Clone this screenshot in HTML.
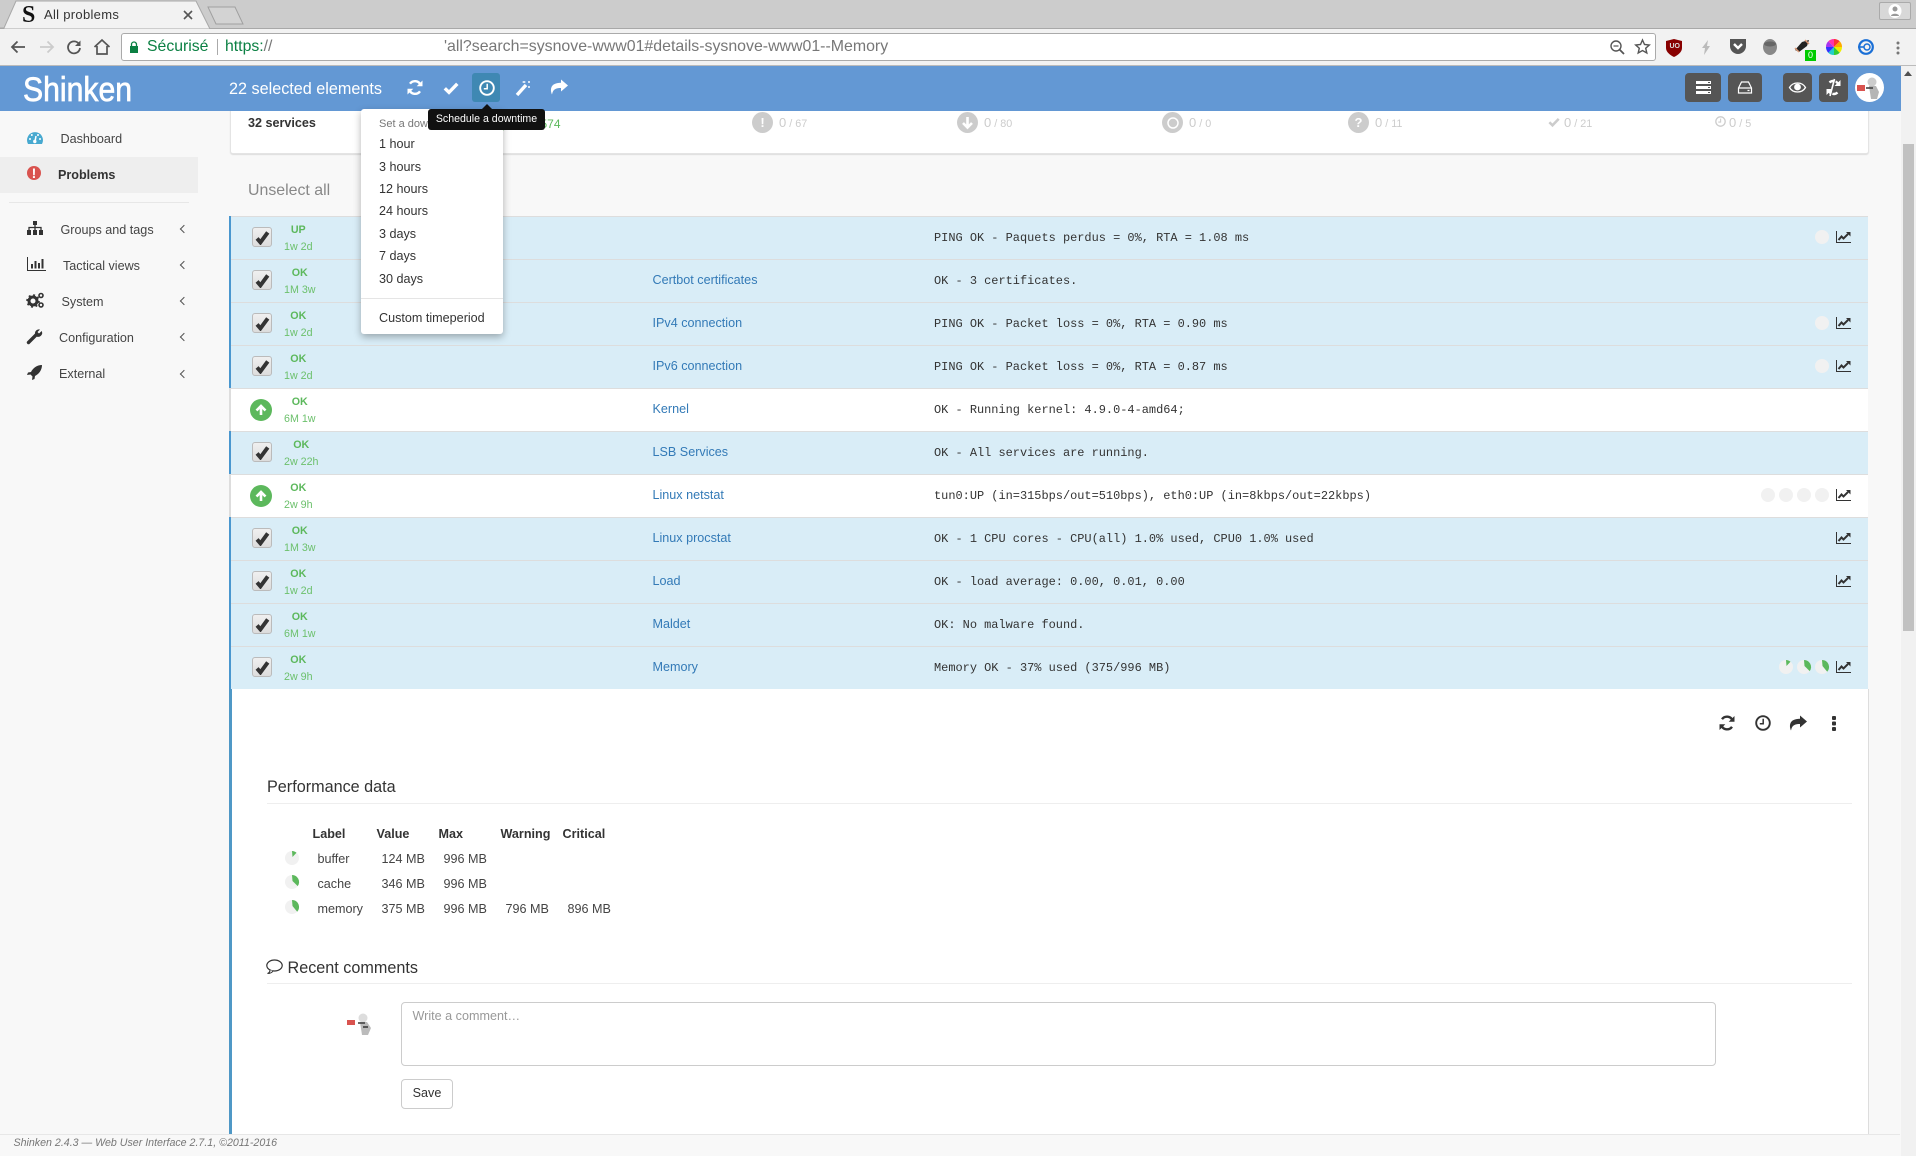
<!DOCTYPE html>
<html><head><meta charset="utf-8"><title>All problems</title>
<style>
*{box-sizing:border-box}
html,body{margin:0;padding:0;width:1916px;height:1156px;overflow:hidden;background:#f8f8f8;font-family:"Liberation Sans",sans-serif;font-size:12.6px;color:#333}
.a{position:absolute;white-space:nowrap;line-height:16px}
svg{position:absolute;overflow:visible}
.tbtn{position:absolute;top:73px;height:29px;background:#555;border-radius:4px}
.side{position:absolute;white-space:nowrap;line-height:16px;color:#444;font-size:12.6px}
.chev{position:absolute;left:181px;width:6px;height:6px;border-left:1.3px solid #555;border-bottom:1.3px solid #555;transform:rotate(45deg)}
.item{position:absolute;left:379px;line-height:16px;color:#333;white-space:nowrap}
.r{position:absolute;left:230px;width:1638px;height:43px;border-top:1px solid #ddd;background:#fff}
.r.s{background:#d9edf7}
.r::before{content:"";position:absolute;left:-1px;top:-1px;bottom:0;width:2px;background:#ddd}
.r.s::before{background:#4a97cf}
.st{position:absolute;left:54px;top:5px;text-align:center;color:#5cb85c;font-size:10.7px;line-height:17px}
.st b{display:block}
.st i{display:block;font-style:normal;color:#6cc06c}
.svc{position:absolute;left:422.5px;top:12px;line-height:16px;color:#337ab7}
.out{position:absolute;left:704px;top:13px;font:11.95px/16px "Liberation Mono",monospace;color:#333;white-space:pre}
.cb{position:absolute;left:22px;top:9.5px;width:20px;height:20px;background:linear-gradient(#f0f0f0,#dcdcdc);border:1px solid #bbb;border-radius:3px}
.gc{position:absolute;left:20px;top:9.5px;width:22px;height:22px;border-radius:50%;background:#5cb85c}
.dot{position:absolute;top:13px;width:14px;height:14px;border-radius:50%;background:#f1f1f1}
.gray{position:absolute;top:112px;width:21px;height:21px;border-radius:50%;background:#ccc;color:#fff;text-align:center;font:bold 13px/21px "Liberation Sans",sans-serif}
.cnt{position:absolute;top:114.5px;line-height:16px;color:#ccc;font-size:10.8px;white-space:nowrap}
.cnt span{font-size:13px}
.th{position:absolute;top:826px;font-weight:bold;line-height:16px;color:#333}
.td{position:absolute;line-height:16px;color:#444;white-space:nowrap}
</style></head><body>
<svg width="0" height="0" style="position:absolute"><defs>
<symbol id="refresh" viewBox="0 0 16 16"><path d="M13.6 5.8A6 6 0 0 0 3 4.2M2.4 10.2A6 6 0 0 0 13 11.8" fill="none" stroke="currentColor" stroke-width="2.4"/><path d="M15.5 1V6.8H9.7ZM.5 15V9.2H6.3Z" fill="currentColor"/></symbol>
<symbol id="check" viewBox="0 0 16 16"><path d="M1.8 8.3L6 12.4L14.3 3.8" fill="none" stroke="currentColor" stroke-width="3.4"/></symbol>
<symbol id="clock" viewBox="0 0 16 16"><circle cx="8" cy="8" r="6.8" fill="none" stroke="currentColor" stroke-width="1.9"/><path d="M8.2 3.8V8.8H4.8" fill="none" stroke="currentColor" stroke-width="1.5"/></symbol>
<symbol id="share" viewBox="0 0 18 16"><path d="M11 .5L18 6.5L11 12.5V9C6 9 3 10 2 15.5C0 11 0 3.8 11 3.8Z" fill="currentColor"/></symbol>
<symbol id="chart" viewBox="0 0 15 12"><path d="M.5 0V11.5H15" fill="none" stroke="currentColor" stroke-width="1"/><path d="M2.5 9L5.5 5.5L7.5 7.5L12 3" fill="none" stroke="currentColor" stroke-width="2"/><path d="M10 1H14.5V5.5Z" fill="currentColor"/></symbol>
<symbol id="tick" viewBox="0 0 16 16"><path d="M2.2 9L5.8 13.2L13.6 2.6" fill="none" stroke="#333" stroke-width="4.2"/></symbol>
</defs></svg>

<!-- Chrome -->
<div style="position:absolute;left:0;top:0;width:1916px;height:29px;background:#ccc;border-bottom:1px solid #a8a8a8"></div>
<svg style="left:0;top:0" width="260" height="29"><path d="M0 28H4L16 1H196L210 29H0Z" fill="#f2f2f2" stroke="#a8a8a8"/><path d="M208 7H235L243 24H216Z" fill="#d3d3d3" stroke="#a0a0a0"/></svg>
<div class="a" style="left:22px;top:3px;font:bold 24px/24px 'Liberation Serif',serif;color:#111">S</div>
<div class="a" style="left:44px;top:7px;font-size:13px;color:#333;letter-spacing:.3px">All problems</div>
<svg style="left:184px;top:11px" width="8" height="8"><path d="M0 0L8 8M8 0L0 8" stroke="#555" stroke-width="1.6"/></svg>
<div style="position:absolute;left:0;top:29px;width:1916px;height:37px;background:#f2f2f2;border-bottom:1px solid #bbb"></div>
<svg style="left:10px;top:40px" width="16" height="14"><path d="M15 7H2M7.5 1.5L2 7L7.5 12.5" fill="none" stroke="#555" stroke-width="1.8"/></svg>
<svg style="left:39px;top:40px" width="16" height="14"><path d="M1 7H14M8.5 1.5L14 7L8.5 12.5" fill="none" stroke="#ccc" stroke-width="1.8"/></svg>
<svg style="left:67px;top:40px" width="14" height="14"><path d="M12 4A6 6 0 1 0 13 8" fill="none" stroke="#555" stroke-width="1.8"/><path d="M13.5 .5V6H8Z" fill="#555"/></svg>
<svg style="left:94px;top:39px" width="16" height="16"><path d="M.5 8L8 1L15.5 8M3 7V15H13V7" fill="none" stroke="#555" stroke-width="1.7"/></svg>
<div style="position:absolute;left:121px;top:33px;width:1535px;height:28px;background:#fff;border:1px solid #aaa;border-radius:3px"></div>
<svg style="left:130px;top:41px" width="8" height="12"><path d="M1.5 5V3.5a2.5 2.5 0 0 1 5 0V5" fill="none" stroke="#0b8043" stroke-width="1.3"/><rect y="5" width="8" height="7" fill="#0b8043"/></svg>
<div class="a" style="left:147px;top:39px;font-size:15.8px;color:#0b8043">Sécurisé</div>
<div style="position:absolute;left:217px;top:39px;width:1px;height:16px;background:#aaa"></div>
<div class="a" style="left:225px;top:39px;font-size:15.8px;color:#0b8043">https:<span style="color:#777">//</span></div>
<div class="a" style="left:444px;top:39px;font-size:15.9px;color:#777">'all?search=sysnove-www01#details-sysnove-www01--Memory</div>
<svg style="left:1610px;top:40px" width="15" height="15"><circle cx="6" cy="6" r="5" fill="none" stroke="#555" stroke-width="1.4"/><path d="M3.5 6H8.5" stroke="#555" stroke-width="1.2"/><path d="M9.5 9.5L14 14" stroke="#555" stroke-width="1.8"/></svg>
<svg style="left:1635px;top:39px" width="15" height="15"><path d="M7.5 1L9.5 5.5L14.3 6L10.7 9.2L11.8 14L7.5 11.5L3.2 14L4.3 9.2L.7 6L5.5 5.5Z" fill="none" stroke="#555" stroke-width="1.4"/></svg>
<svg style="left:1666px;top:39px" width="16" height="18"><path d="M0 2L8 0L16 2V9C16 13 12 16 8 18C4 16 0 13 0 9Z" fill="#800"/></svg>
<div class="a" style="left:1669.5px;top:41px;font:bold 7px/12px 'Liberation Sans',sans-serif;color:#ddd">UO</div>
<svg style="left:1702px;top:40px" width="8" height="15"><path d="M6 0L0 8H3L2 15L8 6H5Z" fill="#bbb"/></svg>
<svg style="left:1730px;top:39px" width="16" height="15"><path d="M0 0H16V7A8 8 0 0 1 0 7Z" fill="#555"/><path d="M4 5L8 9L12 5" fill="none" stroke="#fff" stroke-width="2.4"/></svg>
<svg style="left:1763px;top:39px" width="14" height="16"><ellipse cx="7" cy="8" rx="7" ry="8" fill="#888"/><ellipse cx="7" cy="5" rx="6" ry="2.5" fill="#666"/></svg>
<svg style="left:1794px;top:39px" width="16" height="14"><path d="M1 11L8 3L15 1L13 7L5 13Z" fill="#222"/><path d="M1 9L5 13M11 1L15 5" stroke="#d97" stroke-width="1.5"/></svg>
<div style="position:absolute;left:1805px;top:50px;width:11px;height:11px;background:#0c0;color:#fff;font:9px/11px 'Liberation Sans',sans-serif;text-align:center">0</div>
<svg style="left:1826px;top:39px" width="16" height="16" viewBox="0 0 16 16"><path d="M8 8L8 0A8 8 0 0 1 13.7 2.3Z" fill="#f33"/><path d="M8 8L13.7 2.3A8 8 0 0 1 16 8Z" fill="#fa0"/><path d="M8 8H16A8 8 0 0 1 13.7 13.7Z" fill="#ee0"/><path d="M8 8L13.7 13.7A8 8 0 0 1 8 16Z" fill="#3c3"/><path d="M8 8V16A8 8 0 0 1 2.3 13.7Z" fill="#2cc"/><path d="M8 8L2.3 13.7A8 8 0 0 1 0 8Z" fill="#33f"/><path d="M8 8H0A8 8 0 0 1 2.3 2.3Z" fill="#a3e"/><path d="M8 8L2.3 2.3A8 8 0 0 1 8 0Z" fill="#f3a"/></svg>
<svg style="left:1858px;top:39px" width="16" height="16"><circle cx="8" cy="8" r="6.8" fill="none" stroke="#1a6fd6" stroke-width="2.2"/><circle cx="9" cy="8" r="3" fill="none" stroke="#1a6fd6" stroke-width="1.5"/><path d="M0 8H6" stroke="#1a6fd6" stroke-width="1.6"/></svg>
<svg style="left:1896px;top:41px" width="4" height="14"><circle cx="2" cy="2" r="1.5" fill="#777"/><circle cx="2" cy="7" r="1.5" fill="#777"/><circle cx="2" cy="12" r="1.5" fill="#777"/></svg>
<div style="position:absolute;left:1879px;top:2px;width:32px;height:18px;background:#d8d8d8;border:1px solid #aaa;border-radius:2px"></div>
<svg style="left:1888px;top:4px" width="14" height="14"><ellipse cx="7" cy="7" rx="6.5" ry="7" fill="#fff"/><circle cx="7" cy="5" r="2.5" fill="#999"/><path d="M3 12C3 9 11 9 11 12Z" fill="#999"/></svg>

<!-- Sidebar -->
<div style="position:absolute;left:0;top:157px;width:198px;height:36px;background:#eee"></div>
<div style="position:absolute;left:9px;top:202px;width:180px;height:1px;background:#e7e7e7"></div>
<svg style="left:27px;top:131px" width="16" height="13" viewBox="0 0 16 13"><path d="M1 13A8 8 0 1 1 15 13Z" fill="#47a9d0"/><circle cx="3" cy="8" r="1" fill="#fff"/><circle cx="4.8" cy="4" r="1" fill="#fff"/><circle cx="11" cy="4" r="1" fill="#fff"/><circle cx="13" cy="8" r="1" fill="#fff"/><path d="M8 10.5L9 5" stroke="#fff" stroke-width="1.5"/><circle cx="7.8" cy="10.5" r="1.7" fill="#fff"/></svg>
<div class="side" style="left:60.5px;top:131px">Dashboard</div>
<div style="position:absolute;left:27px;top:166px;width:14px;height:14px;border-radius:50%;background:#d9534f;color:#fff;text-align:center;font:bold 14px/14px 'Liberation Sans',sans-serif">!</div>
<div class="side" style="left:58px;top:166.5px;font-weight:bold;color:#333">Problems</div>
<svg style="left:27px;top:221px" width="16" height="14" viewBox="0 0 16 14"><path d="M6 0H10V4H6ZM0 9H4V14H0ZM6 9H10V14H6ZM12 9H16V14H12Z" fill="#333"/><path d="M8 4V9M2 9V6.5H14V9" fill="none" stroke="#333" stroke-width="1.3"/></svg>
<div class="side" style="left:60.5px;top:222px">Groups and tags</div><div class="chev" style="top:226px"></div>
<svg style="left:27px;top:257px" width="19" height="14" viewBox="0 0 19 14"><path d="M.5 0V13.5H19" fill="none" stroke="#333"/><path d="M4 7H6V11.5H4ZM7.5 4H9.5V11.5H7.5ZM11 6H13V11.5H11ZM14.5 2H16.5V11.5H14.5Z" fill="#333"/></svg>
<div class="side" style="left:63px;top:257.5px">Tactical views</div><div class="chev" style="top:262px"></div>
<svg style="left:27px;top:292px" width="18" height="16" viewBox="0 0 18 16"><circle cx="6" cy="9" r="4" fill="none" stroke="#333" stroke-width="3"/><circle cx="6" cy="9" r="6" fill="none" stroke="#333" stroke-width="1.6" stroke-dasharray="2 2.7"/><circle cx="14" cy="3.5" r="2" fill="none" stroke="#333" stroke-width="1.6"/><circle cx="14" cy="13" r="2" fill="none" stroke="#333" stroke-width="1.6"/></svg>
<div class="side" style="left:61.5px;top:293.5px">System</div><div class="chev" style="top:298px"></div>
<svg style="left:27px;top:329px" width="15" height="15" viewBox="0 0 15 15"><path d="M1.5 13.5L9 6" stroke="#333" stroke-width="3.4" stroke-linecap="round"/><path d="M8 5A4 4 0 0 1 13 .5L10.5 3L12 4.5L14.7 2A4 4 0 0 1 9.5 7.5Z" fill="#333"/></svg>
<div class="side" style="left:59px;top:329.5px">Configuration</div><div class="chev" style="top:334px"></div>
<svg style="left:27px;top:365px" width="15" height="15" viewBox="0 0 15 15"><path d="M15 0C10 0 6 3 4 7L1 7.5L0 10L3.5 9.5L5.5 11.5L5 15L7.5 14L8 11C12 9 15 5 15 0Z" fill="#333"/></svg>
<div class="side" style="left:59px;top:366px">External</div><div class="chev" style="top:371px"></div>

<!-- Top card -->
<div style="position:absolute;left:230px;top:100px;width:1639px;height:54px;background:#fff;border:1px solid #e4e4e4;border-top:0;border-radius:0 0 3px 3px;box-shadow:0 1px 1px #ddd"></div>
<div class="a" style="left:248px;top:115px;font-weight:bold">32 services</div>
<div class="gray" style="left:486px;background:#5cb85c"></div>
<div class="a" style="left:516px;top:115.5px;font-size:12px;color:#5cb85c"><span style="font-size:13px">32</span> / 574</div>
<div class="gray" style="left:752px">!</div><div class="cnt" style="left:779px"><span>0</span> / 67</div>
<div class="gray" style="left:957px"><svg style="left:5px;top:4px" width="11" height="13"><path d="M5.5 1V11M1 7L5.5 11.5L10 7" fill="none" stroke="#fff" stroke-width="2.6"/></svg></div><div class="cnt" style="left:984px"><span>0</span> / 80</div>
<div class="gray" style="left:1162px"><svg style="left:4.5px;top:4.5px" width="12" height="12"><circle cx="6" cy="6" r="5" fill="none" stroke="#fff" stroke-width="1.5"/></svg></div><div class="cnt" style="left:1189px"><span>0</span> / 0</div>
<div class="gray" style="left:1348px">?</div><div class="cnt" style="left:1375px"><span>0</span> / 11</div>
<svg style="left:1548px;top:116px;color:#ccc" width="12" height="12"><use href="#check"/></svg><div class="cnt" style="left:1564px"><span>0</span> / 21</div>
<svg style="left:1715px;top:116px;color:#ccc" width="11" height="11"><use href="#clock"/></svg><div class="cnt" style="left:1729px"><span>0</span> / 5</div>
<div class="a" style="left:248px;top:182px;font-size:15.9px;line-height:18px;color:#888">Unselect all</div>

<!-- Rows -->
<div class="r s" style="top:216px"><span class="cb"><svg style="left:2px;top:2px" width="15" height="15"><use href="#tick"/></svg></span><div class="st"><b>UP</b><i>1w 2d</i></div><div class="out">PING OK - Paquets perdus = 0%, RTA = 1.08 ms</div><span class="dot" style="left:1585px"></span><svg style="left:1606px;top:13.5px;color:#333" width="15" height="12"><use href="#chart"/></svg></div>
<div class="r s" style="top:259px"><span class="cb"><svg style="left:2px;top:2px" width="15" height="15"><use href="#tick"/></svg></span><div class="st"><b>OK</b><i>1M 3w</i></div><div class="svc">Certbot certificates</div><div class="out">OK - 3 certificates.</div></div>
<div class="r s" style="top:302px"><span class="cb"><svg style="left:2px;top:2px" width="15" height="15"><use href="#tick"/></svg></span><div class="st"><b>OK</b><i>1w 2d</i></div><div class="svc">IPv4 connection</div><div class="out">PING OK - Packet loss = 0%, RTA = 0.90 ms</div><span class="dot" style="left:1585px"></span><svg style="left:1606px;top:13.5px;color:#333" width="15" height="12"><use href="#chart"/></svg></div>
<div class="r s" style="top:345px"><span class="cb"><svg style="left:2px;top:2px" width="15" height="15"><use href="#tick"/></svg></span><div class="st"><b>OK</b><i>1w 2d</i></div><div class="svc">IPv6 connection</div><div class="out">PING OK - Packet loss = 0%, RTA = 0.87 ms</div><span class="dot" style="left:1585px"></span><svg style="left:1606px;top:13.5px;color:#333" width="15" height="12"><use href="#chart"/></svg></div>
<div class="r" style="top:388px"><span class="gc"><svg style="left:5px;top:5px" width="12" height="12"><path d="M6 11V2M1.5 6.5L6 2L10.5 6.5" fill="none" stroke="#fff" stroke-width="2.6"/></svg></span><div class="st"><b>OK</b><i>6M 1w</i></div><div class="svc">Kernel</div><div class="out">OK - Running kernel: 4.9.0-4-amd64;</div></div>
<div class="r s" style="top:431px"><span class="cb"><svg style="left:2px;top:2px" width="15" height="15"><use href="#tick"/></svg></span><div class="st"><b>OK</b><i>2w 22h</i></div><div class="svc">LSB Services</div><div class="out">OK - All services are running.</div></div>
<div class="r" style="top:474px"><span class="gc"><svg style="left:5px;top:5px" width="12" height="12"><path d="M6 11V2M1.5 6.5L6 2L10.5 6.5" fill="none" stroke="#fff" stroke-width="2.6"/></svg></span><div class="st"><b>OK</b><i>2w 9h</i></div><div class="svc">Linux netstat</div><div class="out">tun0:UP (in=315bps/out=510bps), eth0:UP (in=8kbps/out=22kbps)</div><span class="dot" style="left:1531px"></span><span class="dot" style="left:1549px"></span><span class="dot" style="left:1567px"></span><span class="dot" style="left:1585px"></span><svg style="left:1606px;top:13.5px;color:#333" width="15" height="12"><use href="#chart"/></svg></div>
<div class="r s" style="top:517px"><span class="cb"><svg style="left:2px;top:2px" width="15" height="15"><use href="#tick"/></svg></span><div class="st"><b>OK</b><i>1M 3w</i></div><div class="svc">Linux procstat</div><div class="out">OK - 1 CPU cores - CPU(all) 1.0% used, CPU0 1.0% used</div><svg style="left:1606px;top:13.5px;color:#333" width="15" height="12"><use href="#chart"/></svg></div>
<div class="r s" style="top:560px"><span class="cb"><svg style="left:2px;top:2px" width="15" height="15"><use href="#tick"/></svg></span><div class="st"><b>OK</b><i>1w 2d</i></div><div class="svc">Load</div><div class="out">OK - load average: 0.00, 0.01, 0.00</div><svg style="left:1606px;top:13.5px;color:#333" width="15" height="12"><use href="#chart"/></svg></div>
<div class="r s" style="top:603px"><span class="cb"><svg style="left:2px;top:2px" width="15" height="15"><use href="#tick"/></svg></span><div class="st"><b>OK</b><i>6M 1w</i></div><div class="svc">Maldet</div><div class="out">OK: No malware found.</div></div>
<div class="r s" style="top:646px"><span class="cb"><svg style="left:2px;top:2px" width="15" height="15"><use href="#tick"/></svg></span><div class="st"><b>OK</b><i>2w 9h</i></div><div class="svc">Memory</div><div class="out">Memory OK - 37% used (375/996 MB)</div>
<svg style="left:1549px;top:13px" width="14" height="14"><circle cx="7" cy="7" r="7" fill="#f1f1f1"/><path d="M7 0A7 7 0 0 1 11.5 1.7L7.5 6Z" fill="#5cb85c"/></svg>
<svg style="left:1567px;top:13px" width="14" height="14"><circle cx="7" cy="7" r="7" fill="#f1f1f1"/><path d="M7 0A7 7 0 0 1 12.7 11.1L7.5 6Z" fill="#5cb85c"/></svg>
<svg style="left:1585px;top:13px" width="14" height="14"><circle cx="7" cy="7" r="7" fill="#f1f1f1"/><path d="M7 0A7 7 0 0 1 12.2 11.7L7.5 6Z" fill="#5cb85c"/></svg>
<svg style="left:1606px;top:13.5px;color:#333" width="15" height="12"><use href="#chart"/></svg></div>

<!-- Details -->
<div style="position:absolute;left:229px;top:689px;width:640px;height:445px;background:#fff;border-left:3px solid #4f98c6"></div>
<div style="position:absolute;left:869px;top:689px;width:1000px;height:445px;background:#fff;border-right:1px solid #ddd"></div>
<svg style="left:1719px;top:715px;color:#333" width="16" height="16"><use href="#refresh"/></svg>
<svg style="left:1755px;top:715px;color:#333" width="16" height="16"><use href="#clock"/></svg>
<svg style="left:1789px;top:715px;color:#333" width="18" height="16"><use href="#share"/></svg>
<svg style="left:1832px;top:716px" width="4" height="15"><rect width="4" height="4" rx="1" fill="#333"/><rect y="5.5" width="4" height="4" rx="1" fill="#333"/><rect y="11" width="4" height="4" rx="1" fill="#333"/></svg>
<div class="a" style="left:267px;top:778px;font-size:16.2px;line-height:18px;color:#333">Performance data</div>
<div style="position:absolute;left:267px;top:803px;width:1585px;height:1px;background:#eee"></div>
<div class="th" style="left:312.5px">Label</div><div class="th" style="left:376.5px">Value</div><div class="th" style="left:438.5px">Max</div><div class="th" style="left:500.5px">Warning</div><div class="th" style="left:562.5px">Critical</div>
<svg style="left:285px;top:851px" width="14" height="14"><circle cx="7" cy="7" r="7" fill="#f1f1f1"/><path d="M7 0A7 7 0 0 1 11.5 1.7L7.5 6Z" fill="#5cb85c"/></svg>
<svg style="left:285px;top:875px" width="14" height="14"><circle cx="7" cy="7" r="7" fill="#f1f1f1"/><path d="M7 0A7 7 0 0 1 12.7 11.1L7.5 6Z" fill="#5cb85c"/></svg>
<svg style="left:285px;top:900px" width="14" height="14"><circle cx="7" cy="7" r="7" fill="#f1f1f1"/><path d="M7 0A7 7 0 0 1 12.2 11.7L7.5 6Z" fill="#5cb85c"/></svg>
<div class="td" style="left:317.5px;top:851px">buffer</div><div class="td" style="left:381.5px;top:851px">124 MB</div><div class="td" style="left:443.5px;top:851px">996 MB</div>
<div class="td" style="left:317.5px;top:876px">cache</div><div class="td" style="left:381.5px;top:876px">346 MB</div><div class="td" style="left:443.5px;top:876px">996 MB</div>
<div class="td" style="left:317.5px;top:901px">memory</div><div class="td" style="left:381.5px;top:901px">375 MB</div><div class="td" style="left:443.5px;top:901px">996 MB</div><div class="td" style="left:505.5px;top:901px">796 MB</div><div class="td" style="left:567.5px;top:901px">896 MB</div>
<svg style="left:266px;top:959px" width="17" height="15" viewBox="0 0 17 15"><ellipse cx="8.5" cy="6.5" rx="7.7" ry="5.5" fill="none" stroke="#333" stroke-width="1.2"/><path d="M4 11C4 12.5 3 14 1.5 14.5C4 14.5 6 13.5 7 12" fill="#fff" stroke="#333" stroke-width="1.1"/></svg>
<div class="a" style="left:287.5px;top:959px;font-size:16.2px;line-height:18px;color:#333">Recent comments</div>
<div style="position:absolute;left:267px;top:983px;width:1585px;height:1px;background:#eee"></div>
<svg style="left:347px;top:1012px" width="26" height="24" viewBox="0 0 26 24"><rect x="0" y="8" width="8" height="5" fill="#d9534f"/><circle cx="16" cy="6" r="4.5" fill="#ddd"/><path d="M13 10H20L24 16L21 23H15Z" fill="#bbb"/><path d="M11 11H18" stroke="#444" stroke-width="1.6"/><path d="M16 15H21" stroke="#555" stroke-width="2"/></svg>
<div style="position:absolute;left:401px;top:1002px;width:1315px;height:64px;background:#fff;border:1px solid #ccc;border-radius:4px"></div>
<div class="a" style="left:412.5px;top:1008px;color:#999">Write a comment…</div>
<div style="position:absolute;left:401px;top:1079px;width:52px;height:30px;background:#fff;border:1px solid #ccc;border-radius:4px;text-align:center;line-height:26px;color:#333">Save</div>

<!-- Footer -->
<div style="position:absolute;left:0;top:1134px;width:1900px;height:22px;background:#f8f8f8;border-top:1px solid #e7e7e7"></div>
<div class="a" style="left:13.5px;top:1135px;font-size:10.65px;font-style:italic;color:#777">Shinken 2.4.3 — Web User Interface 2.7.1, ©2011-2016</div>

<!-- Navbar -->
<div style="position:absolute;left:0;top:66px;width:1901px;height:45px;background:#6398d4"></div>
<svg style="left:23px;top:72px" width="112" height="34"><text x="0" y="29" font-family="Liberation Sans" font-size="34" fill="#fff" stroke="#fff" stroke-width=".7" textLength="109" lengthAdjust="spacingAndGlyphs">Shinken</text></svg>
<div class="a" style="left:229px;top:80px;font-size:16.2px;line-height:18px;color:#fff">22 selected elements</div>
<svg style="left:407px;top:79px;color:#fff" width="16" height="17"><use href="#refresh"/></svg>
<svg style="left:443px;top:80px;color:#fff" width="16" height="16"><use href="#check"/></svg>
<div style="position:absolute;left:472px;top:73px;width:28px;height:29px;background:#3f88b3;border-radius:3px"></div>
<svg style="left:479px;top:80px;color:#fff" width="16" height="16"><use href="#clock"/></svg>
<svg style="left:515px;top:80px" width="16" height="16"><path d="M2 15L11 5" stroke="#fff" stroke-width="3.4"/><path d="M9 1V3M7.5 2H10.5M14 1V3M13 2H15M14 6V8M13 7H15" stroke="#fff"/></svg>
<svg style="left:550px;top:79px;color:#fff" width="18" height="16"><use href="#share"/></svg>
<div class="tbtn" style="left:1685px;width:36px"></div>
<svg style="left:1696px;top:81px" width="15" height="13"><path d="M0 0H15V3H0ZM0 5H15V8H0ZM0 10H15V13H0Z" fill="#fff"/><path d="M12 1.5H14M12 6.5H14M12 11.5H14" stroke="#555"/></svg>
<div class="tbtn" style="left:1728px;width:34px"></div>
<svg style="left:1738px;top:81px" width="14" height="13"><path d="M3.5 1H10.5L13.5 7V12H.5V7Z" fill="none" stroke="#fff" stroke-width="1.2"/><path d="M1 7H13M9.5 9.5H11.5" stroke="#fff" stroke-width="1.2"/></svg>
<div class="tbtn" style="left:1783px;width:29px"></div>
<svg style="left:1789px;top:82px" width="17" height="11"><path d="M.5 5.5C4 -.5 13 -.5 16.5 5.5C13 11.5 4 11.5 .5 5.5Z" fill="none" stroke="#fff" stroke-width="1.3"/><circle cx="8.5" cy="5" r="3.4" fill="#fff"/></svg>
<div class="tbtn" style="left:1819px;width:29px"></div>
<svg style="left:1826px;top:78px;color:#fff" width="15" height="19" viewBox="0 0 15 19"><path d="M12.5 7A5.5 5.5 0 0 0 3.5 4.5M2.5 12A5.5 5.5 0 0 0 11.5 14.5" fill="none" stroke="#fff" stroke-width="2.4"/><path d="M14.5 2V8H8.5ZM.5 17V11H6.5Z" fill="#fff"/><path d="M10 0L5 19" stroke="#555" stroke-width="1"/><path d="M8.5 1L4 18" stroke="#fff" stroke-width="1.6"/></svg>
<div style="position:absolute;left:1855px;top:73px;width:29px;height:29px;border-radius:50%;background:#fff;overflow:hidden"></div>
<svg style="left:1857px;top:76px" width="26" height="24" viewBox="0 0 26 24"><rect x="0" y="9" width="8" height="6" fill="#d9534f"/><circle cx="15" cy="6" r="4.5" fill="#ccc"/><path d="M12 10H19L22 16L20 23H14Z" fill="#b5b5b5"/><path d="M9 12H16" stroke="#444" stroke-width="1.6"/></svg>

<!-- Dropdown -->
<div style="position:absolute;left:361px;top:109px;width:142px;height:225px;background:#fff;border-radius:3px;box-shadow:0 3px 8px rgba(0,0,0,.3)"></div>
<div class="item" style="top:116px;font-size:11px;color:#777">Set a downtime for...</div>
<div class="item" style="top:136px">1 hour</div>
<div class="item" style="top:159px">3 hours</div>
<div class="item" style="top:181px">12 hours</div>
<div class="item" style="top:203px">24 hours</div>
<div class="item" style="top:226px">3 days</div>
<div class="item" style="top:248px">7 days</div>
<div class="item" style="top:271px">30 days</div>
<div style="position:absolute;left:361px;top:298px;width:142px;height:1px;background:#e5e5e5"></div>
<div class="item" style="top:310px">Custom timeperiod</div>

<!-- Tooltip -->
<svg style="left:482px;top:104px" width="10" height="5"><path d="M0 5L5 0L10 5Z" fill="#111"/></svg>
<div style="position:absolute;left:428px;top:109px;width:117px;height:21px;background:#111;border-radius:3px;color:#fff;font-size:10.6px;line-height:20px;text-align:center;white-space:nowrap">Schedule a downtime</div>

<!-- Scrollbar -->
<div style="position:absolute;left:1901px;top:66px;width:15px;height:1090px;background:#f1f1f1"></div>
<div style="position:absolute;left:1903px;top:144px;width:11px;height:487px;background:#c1c1c1"></div>
<svg style="left:1904px;top:71px" width="8" height="5"><path d="M0 5L4 0L8 5Z" fill="#505050"/></svg>
</body></html>
